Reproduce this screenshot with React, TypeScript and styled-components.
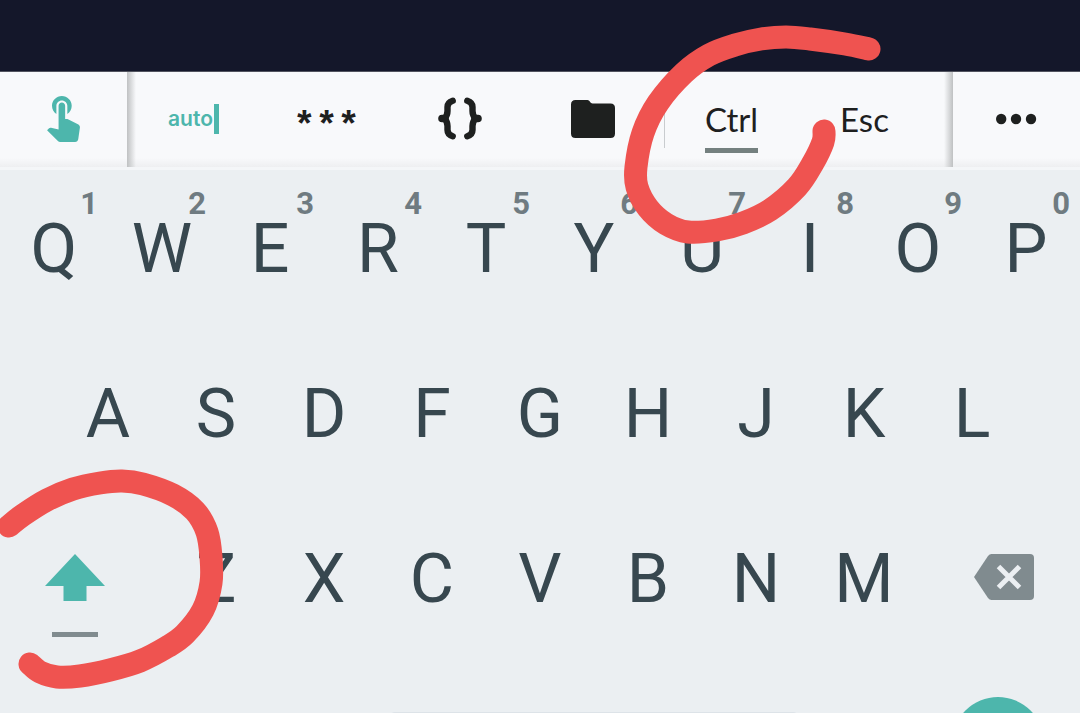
import React from "react";
import styled, { createGlobalStyle } from "styled-components";

const colors = {
  screen: "#14172a",
  bar: "#f8f9fb",
  board: "#ebeff2",
  ink: "#1e201f",
  letter: "#37474f",
  hint: "#6f7b81",
  teal: "#4db6ac",
  muted: "#808b8f",
  marker: "#ef5350",
};

const GlobalStyle = createGlobalStyle`
  *, *::before, *::after { box-sizing: border-box; }
  body { margin: 0; background: ${colors.board}; }
  button { margin: 0; padding: 0; border: 0; background: none; color: inherit; font: inherit; cursor: pointer; }
  svg { display: block; }
`;

const Page = styled.div`
  position: relative;
  display: flex;
  flex-direction: column;
  height: 100vh;
  overflow: hidden;
  background: ${colors.board};
`;

const TerminalArea = styled.header`
  flex: none;
  height: 72px;
  background: ${colors.screen};
  border-bottom: 1px solid #52545f;
`;

const Toolbar = styled.nav`
  flex: none;
  display: flex;
  height: 98px;
  border-bottom: 3px solid #f4f6f8;
  background: linear-gradient(to bottom, ${colors.bar} 86px, #eeeff1 95px);
  color: ${colors.ink};
`;

const ToolButton = styled.button`
  display: flex;
  flex: 133 1 0;
  align-items: center;
  justify-content: center;
  padding-bottom: 2px;
`;

const PinnedTool = styled(ToolButton)`
  flex: 127 1 0;
`;

const Tools = styled.div`
  display: flex;
  flex: 826 1 0;
  background:
    linear-gradient(to right, #bfc1c2, rgba(191, 193, 194, 0)) left / 9px 100% no-repeat,
    linear-gradient(to left, #bfc1c2, rgba(191, 193, 194, 0)) right / 9px 100% no-repeat;

  &::after {
    content: "";
    flex: none;
    width: 22px;
  }
`;

const Divider = styled.span`
  flex: none;
  align-self: center;
  width: 1px;
  height: 56px;
  margin-left: 5px;
  background: #c9cccf;
`;

const AutoLabel = styled.span`
  padding-right: 1px;
  border-right: 5px solid ${colors.teal};
  color: ${colors.teal};
  font: 600 21px/30px Inter, sans-serif;
`;

const Stars = styled.span`
  padding-top: 16px;
  font: 700 37px/40px "Liberation Mono", monospace;
`;

const KeyName = styled.span<{ $active?: boolean }>`
  padding: 14px 0 9px;
  border-bottom: 5px solid ${(p) => (p.$active ? "#74807f" : "transparent")};
  font: 400 33px/40px Lato, sans-serif;
`;

const Keyboard = styled.main`
  display: flex;
  flex-direction: column;
  color: ${colors.letter};
`;

const KeyRow = styled.div<{ $inset?: boolean }>`
  display: flex;
  height: 165px;
  padding: 0 ${(p) => (p.$inset ? "5%" : "0")};
`;

const Key = styled.button<{ $wide?: boolean }>`
  position: relative;
  display: flex;
  flex: ${(p) => (p.$wide ? 3 : 2)} 1 0;
  justify-content: center;
  font: 400 68px/158px Roboto, sans-serif;
`;

const Hint = styled.span`
  position: absolute;
  top: 18px;
  right: 10px;
  color: ${colors.hint};
  font: 700 31px/32px Roboto, sans-serif;
`;

const ShiftKey = styled(Key)`
  flex-direction: column;
  align-items: center;
  justify-content: flex-start;
  gap: 31px;
  padding-top: 54px;

  & > * { margin-right: 12px; }
`;

const LockBar = styled.span`
  width: 46px;
  height: 5px;
  background: ${colors.muted};
`;

const DeleteKey = styled(Key)`
  align-items: flex-start;
  padding-top: 54px;

  & > svg { margin-left: 10px; }
`;

const BottomRow = styled.div`
  display: flex;
  align-items: flex-start;
  padding-top: 32px;
`;

const SpaceBar = styled.button`
  flex: none;
  width: 38%;
  height: 60px;
  margin: 15px 0 0 36%;
  border-radius: 6px;
  background: #dde3e8;
`;

const EnterSlot = styled.div`
  display: flex;
  flex: 1;
  justify-content: flex-end;
  padding-right: 36px;
`;

const EnterKey = styled.button`
  width: 92px;
  height: 92px;
  border-radius: 50%;
  background: ${colors.teal};
`;

const Markup = styled.svg`
  position: absolute;
  top: 0;
  left: 0;
  width: 100%;
  pointer-events: none;
`;

type Point = [number, number];

const aroundCtrl: Point[] = [
  [869, 49], [845, 44], [810, 39], [786, 37], [761, 39], [735, 45], [709, 55],
  [684, 73], [658, 103], [643, 133], [636, 167], [637, 187], [648, 208],
  [666, 224], [688, 232], [717, 230], [743, 223], [770, 210], [797, 187],
  [813, 163], [823, 142], [824, 131],
];

const aroundShift: Point[] = [
  [9, 526], [23, 515], [47, 500], [73, 489], [100, 483], [122, 481], [143, 484],
  [173, 495], [195, 511], [207, 532], [211, 557], [211, 583], [203, 610],
  [185, 634], [167, 647], [140, 661], [110, 670], [80, 676], [57, 677],
  [40, 672], [30, 664],
];

// Smooth freehand stroke: a Catmull-Rom spline written as cubic segments.
function strokePath(points: Point[]): string {
  let d = `M${points[0].join(" ")}`;
  for (let i = 0; i < points.length - 1; i++) {
    const p0 = points[Math.max(i - 1, 0)];
    const p1 = points[i];
    const p2 = points[i + 1];
    const p3 = points[Math.min(i + 2, points.length - 1)];
    d += `C${p1[0] + (p2[0] - p0[0]) / 6} ${p1[1] + (p2[1] - p0[1]) / 6} `;
    d += `${p2[0] - (p3[0] - p1[0]) / 6} ${p2[1] - (p3[1] - p1[1]) / 6} `;
    d += `${p2[0]} ${p2[1]}`;
  }
  return d;
}

const TouchIcon = () => (
  <svg width="33" height="46" viewBox="4.75 3 15 21" fill={colors.teal} aria-hidden="true">
    <path d="M9 11.24V7.5C9 6.12 10.12 5 11.5 5S14 6.12 14 7.5v3.74c1.21-.81 2-2.18 2-3.74C16 5.01 13.99 3 11.5 3S7 5.01 7 7.5c0 1.56.79 2.93 2 3.74zm9.84 4.63l-4.54-2.26c-.17-.07-.35-.11-.54-.11H13v-6c0-.83-.67-1.5-1.5-1.5S10 6.67 10 7.5v10.74l-3.43-.72c-.08-.01-.15-.03-.24-.03-.31 0-.59.13-.79.33l-.79.8 4.94 4.94c.27.27.65.44 1.06.44h6.79c.75 0 1.33-.55 1.44-1.28l.75-5.27c.01-.07.02-.14.02-.2 0-.62-.38-1.16-.91-1.38z" />
  </svg>
);

const BracesIcon = () => (
  <svg width="44" height="43" viewBox="0 0 44 43" fill="none" stroke={colors.ink} strokeWidth="6.4" strokeLinecap="round" strokeLinejoin="round" aria-hidden="true">
    <path d="M14.7 3.8C11 5 9.5 7 9.5 10v4q0 4-2.8 7.5q2.8 3.5 2.8 7.5v4c0 3 1.5 5 5.2 6.2" />
    <path d="M29.3 3.8C33 5 34.5 7 34.5 10v4q0 4 2.8 7.5q-2.8 3.5-2.8 7.5v4c0 3-1.5 5-5.2 6.2" />
    <path d="M4 21.5h3M37 21.5h3" strokeWidth="7.6" />
  </svg>
);

const FolderIcon = () => (
  <svg width="44" height="38" viewBox="0 0 44 38" fill={colors.ink} aria-hidden="true">
    <path d="M4.5 0H16.5C18.5 0 19.5 3.5 21.5 3.5H39.5Q44 3.5 44 8V33.5Q44 38 39.5 38H4.5Q0 38 0 33.5V4.5Q0 0 4.5 0Z" />
  </svg>
);

const MoreIcon = () => (
  <svg width="42" height="12" viewBox="0 0 42 12" fill={colors.ink} aria-hidden="true">
    <circle cx="5.2" cy="6" r="5.2" />
    <circle cx="20" cy="6" r="5.2" />
    <circle cx="35" cy="6" r="5.2" />
  </svg>
);

const ShiftIcon = () => (
  <svg width="60" height="47" viewBox="0 0 60 47" fill={colors.teal} aria-hidden="true">
    <path d="M30 0L60 32H41.5V47H18.5V32H0Z" />
  </svg>
);

const BackspaceIcon = () => (
  <svg width="60" height="46" viewBox="0 0 60 46" aria-hidden="true">
    <path d="M17.5 0H56Q60 0 60 4V42Q60 46 56 46H17.5Q15.5 46 14 44L0 23L14 2Q15.5 0 17.5 0Z" fill={colors.muted} />
    <path d="M24.5 12.5L45.5 33.5M45.5 12.5L24.5 33.5" stroke={colors.board} strokeWidth="5" />
  </svg>
);

const topRow = ["Q", "W", "E", "R", "T", "Y", "U", "I", "O", "P"];
const homeRow = ["A", "S", "D", "F", "G", "H", "J", "K", "L"];
const lowerRow = ["Z", "X", "C", "V", "B", "N", "M"];

export default function App() {
  return (
    <Page>
      <GlobalStyle />
      <TerminalArea />
      <Toolbar aria-label="Terminal keys">
        <PinnedTool aria-label="Touch mode"><TouchIcon /></PinnedTool>
        <Tools>
          <ToolButton><AutoLabel>auto</AutoLabel></ToolButton>
          <ToolButton aria-label="Passwords"><Stars>***</Stars></ToolButton>
          <ToolButton aria-label="Snippets"><BracesIcon /></ToolButton>
          <ToolButton aria-label="Files"><FolderIcon /></ToolButton>
          <Divider />
          <ToolButton aria-pressed="true"><KeyName $active>Ctrl</KeyName></ToolButton>
          <ToolButton><KeyName>Esc</KeyName></ToolButton>
        </Tools>
        <PinnedTool aria-label="More"><MoreIcon /></PinnedTool>
      </Toolbar>
      <Keyboard>
        <KeyRow>
          {topRow.map((letter, i) => (
            <Key key={letter}>
              {letter}
              <Hint>{(i + 1) % 10}</Hint>
            </Key>
          ))}
        </KeyRow>
        <KeyRow $inset>
          {homeRow.map((letter) => <Key key={letter}>{letter}</Key>)}
        </KeyRow>
        <KeyRow>
          <ShiftKey $wide aria-label="Shift"><ShiftIcon /><LockBar /></ShiftKey>
          {lowerRow.map((letter) => <Key key={letter}>{letter}</Key>)}
          <DeleteKey $wide aria-label="Backspace"><BackspaceIcon /></DeleteKey>
        </KeyRow>
        <BottomRow>
          <SpaceBar aria-label="Space" />
          <EnterSlot><EnterKey aria-label="Enter" /></EnterSlot>
        </BottomRow>
      </Keyboard>
      <Markup viewBox="0 0 1080 713" fill="none" stroke={colors.marker} strokeWidth="23" strokeLinecap="round" strokeLinejoin="round" aria-hidden="true">
        <path d={strokePath(aroundCtrl)} />
        <path d={strokePath(aroundShift)} />
      </Markup>
    </Page>
  );
}
